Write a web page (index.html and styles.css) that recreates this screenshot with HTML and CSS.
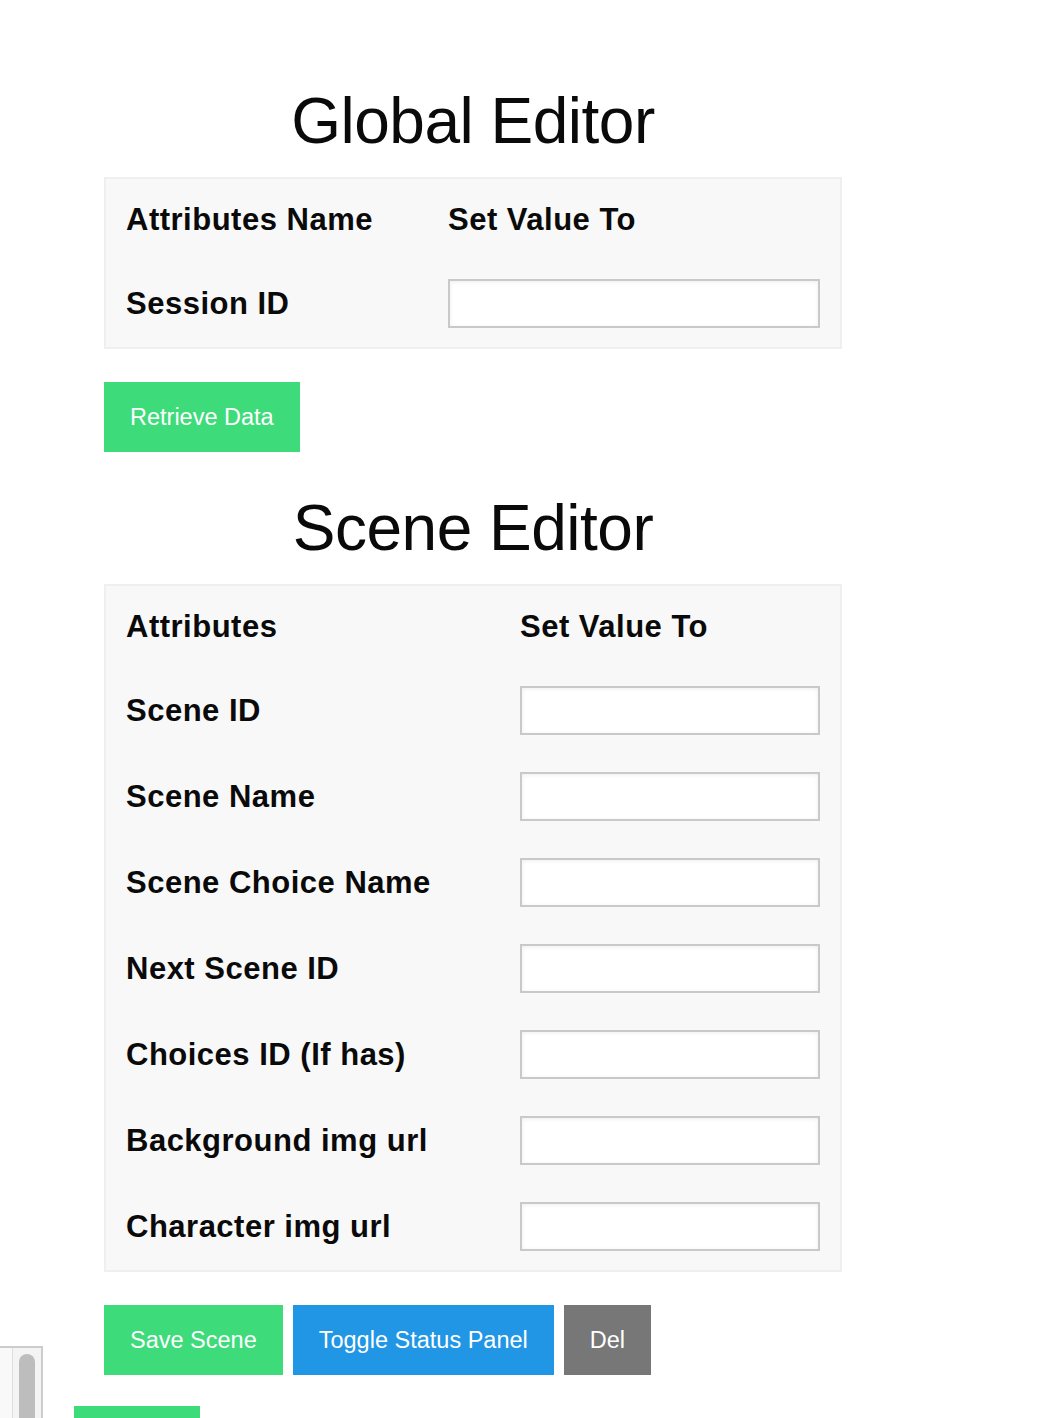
FILE: index.html
```html
<!DOCTYPE html>
<html lang="en">
<head>
<meta charset="utf-8">
<title>Editor</title>
<link rel="stylesheet" href="styles.css">
</head>
<body>
<main class="page">
  <h1 class="title">Global Editor</h1>
  <div class="editor-table global">
    <div class="cell head">Attributes Name</div>
    <div class="cell head">Set Value To</div>
    <div class="cell label">Session ID</div>
    <div class="cell"><input class="field" type="text"></div>
  </div>
  <div class="actions">
    <button class="btn green">Retrieve Data</button>
  </div>

  <h1 class="title second">Scene Editor</h1>
  <div class="editor-table scene">
    <div class="cell head">Attributes</div>
    <div class="cell head">Set Value To</div>
    <div class="cell label">Scene ID</div>
    <div class="cell"><input class="field" type="text"></div>
    <div class="cell label">Scene Name</div>
    <div class="cell"><input class="field" type="text"></div>
    <div class="cell label">Scene Choice Name</div>
    <div class="cell"><input class="field" type="text"></div>
    <div class="cell label">Next Scene ID</div>
    <div class="cell"><input class="field" type="text"></div>
    <div class="cell label">Choices ID (If has)</div>
    <div class="cell"><input class="field" type="text"></div>
    <div class="cell label">Background img url</div>
    <div class="cell"><input class="field" type="text"></div>
    <div class="cell label">Character img url</div>
    <div class="cell"><input class="field" type="text"></div>
  </div>
  <div class="actions">
    <button class="btn green">Save Scene</button>
    <button class="btn blue">Toggle Status Panel</button>
    <button class="btn gray">Del</button>
  </div>
</main>

<div class="status-panel">
  <div class="track"><div class="thumb"></div></div>
</div>
<div class="floating-green"></div>
</body>
</html>
```

FILE: styles.css
```css
html, body {
  margin: 0;
  padding: 0;
  background: #ffffff;
  overflow: hidden;
}

body {
  font-family: "Liberation Sans", Arial, Helvetica, sans-serif;
  color: #0a0a0a;
  position: relative;
  height: 1418px;
}

.page {
  width: 738px;
  margin-left: 104px;
  padding-top: 90px;
}

.title {
  margin: 0 0 24px 0;
  font-size: 64px;
  line-height: 63px;
  height: 63px;
  font-weight: normal;
  letter-spacing: -0.5px;
  text-align: center;
  color: #0a0a0a;
}

.title.second {
  margin-top: 45px;
}

.editor-table {
  background: #f8f8f8;
  border: 2px solid #efefef;
  padding: 0 20px;
  display: grid;
  grid-template-rows: 82px;
  grid-auto-rows: 86px;
}

.editor-table.global {
  grid-template-columns: 322px 1fr;
}

.editor-table.scene {
  grid-template-columns: 394px 1fr;
}

.cell {
  display: flex;
  align-items: center;
  font-size: 31px;
  font-weight: bold;
  letter-spacing: 0.5px;
  white-space: nowrap;
}

.field {
  box-sizing: border-box;
  width: 100%;
  height: 49px;
  margin: -2px 0 0 0;
  border: 2px solid #c9c9c9;
  background: #ffffff;
  box-shadow: inset 0 1px 4px rgba(0, 0, 0, 0.07);
  border-radius: 0;
  outline: none;
}

.actions {
  display: flex;
  gap: 10px;
  margin-top: 33px;
}

.btn {
  height: 70px;
  padding: 0 26px;
  border: none;
  border-radius: 0;
  font-family: "Liberation Sans", Arial, Helvetica, sans-serif;
  font-size: 23.5px;
  color: #ffffff;
  cursor: pointer;
}

.green { background: #3ddb7a; }
.blue { background: #2196e5; }
.gray { background: #777777; }

.status-panel {
  position: absolute;
  left: -20px;
  top: 1346px;
  width: 59px;
  height: 100px;
  border: 2px solid #cccccc;
  background: #f9f9f9;
}

.status-panel .track {
  position: absolute;
  right: 0;
  top: 0;
  bottom: 0;
  width: 28px;
  border-left: 1px solid #dddddd;
  background: #f4f4f4;
}

.status-panel .thumb {
  position: absolute;
  left: 6px;
  top: 6px;
  width: 16px;
  height: 120px;
  border-radius: 8px;
  background: #bdbdbd;
}

.floating-green {
  position: absolute;
  left: 74px;
  top: 1406px;
  width: 126px;
  height: 20px;
  background: #3ddb7a;
}
```
